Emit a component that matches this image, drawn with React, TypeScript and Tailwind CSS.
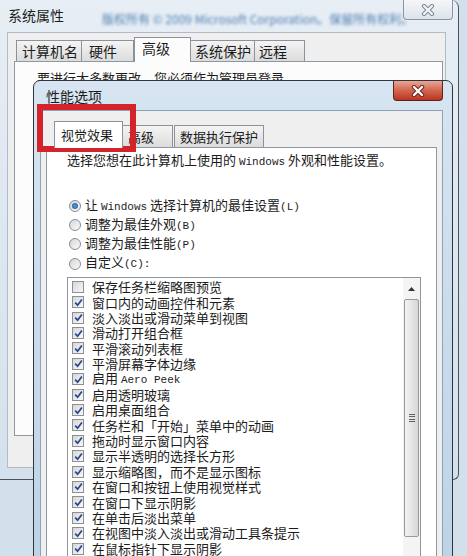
import React from "react";

const items: [string, boolean][] = [
  ["保存任务栏缩略图预览", false],
  ["窗口内的动画控件和元素", true],
  ["淡入淡出或滑动菜单到视图", true],
  ["滑动打开组合框", true],
  ["平滑滚动列表框", true],
  ["平滑屏幕字体边缘", true],
  ["启用 |Aero Peek", true],
  ["启用透明玻璃", true],
  ["启用桌面组合", true],
  ["任务栏和「开始」菜单中的动画", true],
  ["拖动时显示窗口内容", true],
  ["显示半透明的选择长方形", true],
  ["显示缩略图，而不是显示图标", true],
  ["在窗口和按钮上使用视觉样式", true],
  ["在窗口下显示阴影", true],
  ["在单击后淡出菜单", true],
  ["在视图中淡入淡出或滑动工具条提示", true],
  ["在鼠标指针下显示阴影", true],
  ["在桌面上为图标标签使用阴影", true],
];

function XIcon({ dark, light, w = 2.6 }: { dark: string; light: string; w?: number }) {
  return (
    <svg width="14" height="12" viewBox="0 0 14 12">
      <path d="M3 2 L11 10 M11 2 L3 10" stroke={dark} strokeWidth={w + 2} strokeLinecap="round" fill="none" />
      <path d="M3 2 L11 10 M11 2 L3 10" stroke={light} strokeWidth={w} strokeLinecap="round" fill="none" />
    </svg>
  );
}

function Check({ checked }: { checked: boolean }) {
  return (
    <span className="w-[12px] h-[12px] border border-[#8e8f8f] bg-linear-to-br from-[#d4d6d9] to-[#f8f8f8] flex items-center justify-center shrink-0">
      {checked && (
        <svg width="9" height="9" viewBox="0 0 9 9">
          <path d="M1.2 4.6 L3.6 7.2 L7.9 1.4" stroke="#2a4590" strokeWidth="1.7" fill="none" />
        </svg>
      )}
    </span>
  );
}

function Radio({ on }: { on: boolean }) {
  return (
    <span className="w-[12px] h-[12px] rounded-full border border-[#8a8d90] bg-linear-to-br from-[#d3d6da] to-[#fbfbfb] flex items-center justify-center shrink-0">
      {on && <span className="w-[6px] h-[6px] rounded-full bg-radial from-[#5aa0e0] to-[#1b4f93]" />}
    </span>
  );
}

function Mono({ children }: { children: React.ReactNode }) {
  return <span className="font-['Liberation_Mono',monospace] text-[11px]">{children}</span>;
}

function Label({ text }: { text: string }) {
  if (text.includes("|")) {
    const [a, b] = text.split("|");
    return (
      <span>
        {a}
        <Mono>{b}</Mono>
      </span>
    );
  }
  return <span>{text}</span>;
}

export default function App() {
  return (
    <div className="relative w-[467px] h-[556px] overflow-hidden bg-[#d2e0eb] text-[#1c1c1c] font-['Noto_Sans_CJK_SC','Noto_Sans',sans-serif]">
      {/* Outer window: 系统属性 */}
      <div className="absolute left-0 top-0 w-[459px] h-[480px] border-r border-b border-[#4a525b] rounded-tr-[8px] rounded-br-[6px] bg-linear-to-b from-[#e7eef5] via-[#dde7f0] to-[#d4e1ec] flex flex-col">
        <div className="relative h-[32px] shrink-0">
          <div className="pl-[8px] pt-[5px] text-[14px] leading-[20px]">系统属性</div>
          <div className="absolute left-[102px] top-[12px] text-[12px] leading-[14px] text-[#4f7fb2] blur-[1.4px] whitespace-nowrap">
            版权所有 © 2009 Microsoft Corporation。保留所有权利。
          </div>
          <div className="absolute right-[5px] top-0 w-[50px] h-[20px] rounded-b-[4px] border border-t-0 border-[#8b96a1] bg-linear-to-b from-[#f5f7f9] to-[#dce3ea] flex items-center justify-center">
            <XIcon dark="#7d8892" light="#f4f6f8" w={2.2} />
          </div>
        </div>
        <div className="ml-[7px] w-[439px] h-[436px] bg-[#efefef] border border-[#b3bcc6] flex flex-col">
          <div className="flex items-end h-[28px] pl-[8px] shrink-0 text-[14px] leading-[18px]">
            <div className="w-[66px] h-[21px] pl-[5px] pt-[1px] border border-b-0 border-[#8c9298] bg-linear-to-b from-[#f4f4f4] to-[#dcdcdc]">计算机名</div>
            <div className="w-[52px] h-[21px] pl-[7px] pt-[1px] border border-b-0 border-l-0 border-[#8c9298] bg-linear-to-b from-[#f4f4f4] to-[#dcdcdc]">硬件</div>
            <div className="relative z-10 -mb-px w-[57px] h-[25px] pl-[7px] pt-[1px] border border-b-0 border-[#8c9298] bg-[#fcfcfc]">高级</div>
            <div className="w-[64px] h-[21px] pl-[4px] pt-[1px] border border-b-0 border-l-0 border-[#8c9298] bg-linear-to-b from-[#f4f4f4] to-[#dcdcdc]">系统保护</div>
            <div className="w-[50px] h-[21px] pl-[4px] pt-[1px] border border-b-0 border-l-0 border-[#8c9298] bg-linear-to-b from-[#f4f4f4] to-[#dcdcdc]">远程</div>
          </div>
          <div className="ml-[6px] w-[429px] h-[375px] border border-[#8c98a4] bg-[#fcfcfc]">
            <div className="pl-[22px] pt-[8px] text-[13px] leading-[16px]">要进行大多数更改，您必须作为管理员登录。</div>
          </div>
        </div>
      </div>

      {/* Inner window: 性能选项 */}
      <div className="absolute left-[33px] top-[80px] w-[420px] h-[490px] border border-[#30353b] rounded-t-[7px] bg-linear-to-b from-[#d6e5f1] via-[#c9dcec] to-[#bdd3e6] flex flex-col">
        <div className="relative h-[29px] shrink-0">
          <div className="pl-[12px] pt-[5px] text-[14px] leading-[20px]">性能选项</div>
          <div className="absolute left-[359px] top-0 w-[50px] h-[20px] rounded-b-[4px] border border-t-0 border-[#5e2218] bg-linear-to-b from-[#e9a696] via-[#d2654f] to-[#b8341f] flex items-center justify-center">
            <XIcon dark="#6a2a1f" light="#ffffff" w={2.4} />
          </div>
        </div>
        <div className="ml-[6px] w-[403px] flex-1 bg-[#efefef] border border-b-0 border-[#8fa1b2] flex flex-col">
          <div className="flex items-end h-[36px] pl-[13px] pt-[10px] shrink-0 text-[13px] leading-[18px]">
            <div className="relative z-10 -mb-px w-[69px] h-[27px] pl-[6px] pt-[4px] border border-b-0 border-[#8c9298] bg-white">视觉效果</div>
            <div className="w-[50px] h-[22px] pl-[5px] pt-[2px] border border-b-0 border-l-0 border-[#8c9298] bg-linear-to-b from-[#f4f4f4] to-[#dcdcdc]">高级</div>
            <div className="ml-px w-[90px] h-[22px] pl-[5px] pt-[2px] border border-b-0 border-[#8c9298] bg-linear-to-b from-[#f4f4f4] to-[#dcdcdc]">数据执行保护</div>
          </div>
          <div className="ml-[5px] w-[391px] flex-1 border border-b-0 border-[#8c98a4] bg-white flex flex-col">
            <div className="pl-[20px] pt-[4px] h-[20px] text-[13px] leading-[16px] whitespace-nowrap">
              选择您想在此计算机上使用的 <Mono>Windows</Mono> 外观和性能设置。
            </div>
            <div className="mt-[28px] pl-[22px] flex flex-col text-[13px] leading-[19.3px]">
              <div className="flex items-center gap-[4px] h-[19.3px]">
                <Radio on />
                <span>
                  让 <Mono>Windows</Mono> 选择计算机的最佳设置<Mono>(L)</Mono>
                </span>
              </div>
              <div className="flex items-center gap-[4px] h-[19.3px]">
                <Radio on={false} />
                <span>
                  调整为最佳外观<Mono>(B)</Mono>
                </span>
              </div>
              <div className="flex items-center gap-[4px] h-[19.3px]">
                <Radio on={false} />
                <span>
                  调整为最佳性能<Mono>(P)</Mono>
                </span>
              </div>
              <div className="flex items-center gap-[4px] h-[19.3px]">
                <Radio on={false} />
                <span>
                  自定义<Mono>(C):</Mono>
                </span>
              </div>
            </div>
            <div className="mt-[4px] ml-[20px] w-[354px] h-[320px] border border-[#8f969d] bg-white flex">
              <div className="flex-1 pt-px pl-[4px] flex flex-col text-[13px] leading-[15.4px]">
                {items.map(([t, c], i) => (
                  <div key={i} className="flex items-center gap-[8px] h-[15.4px] whitespace-nowrap">
                    <Check checked={c} />
                    <Label text={t} />
                  </div>
                ))}
              </div>
              <div className="w-[17px] bg-[#f4f4f4] flex flex-col items-center shrink-0">
                <div className="h-[21px] w-full flex items-center justify-center">
                  <svg width="7" height="4" viewBox="0 0 7 4">
                    <path d="M0 4 L3.5 0 L7 4 Z" fill="#333" />
                  </svg>
                </div>
                <div className="w-[15px] h-[238px] rounded-[2px] border border-[#959a9f] bg-linear-to-r from-[#f2f2f2] via-[#e6e6e6] to-[#d6d6d6] flex flex-col items-center justify-center gap-[1.5px]">
                  <span className="w-[6px] h-px bg-[#5f6366]" />
                  <span className="w-[6px] h-px bg-[#5f6366]" />
                  <span className="w-[6px] h-px bg-[#5f6366]" />
                  <span className="w-[6px] h-px bg-[#5f6366]" />
                </div>
              </div>
            </div>
          </div>
        </div>
      </div>

      {/* Red highlight */}
      <div className="absolute left-[37px] top-[104px] w-[99px] h-[48px] border-[6px] border-[#d4242b]" />
    </div>
  );
}
